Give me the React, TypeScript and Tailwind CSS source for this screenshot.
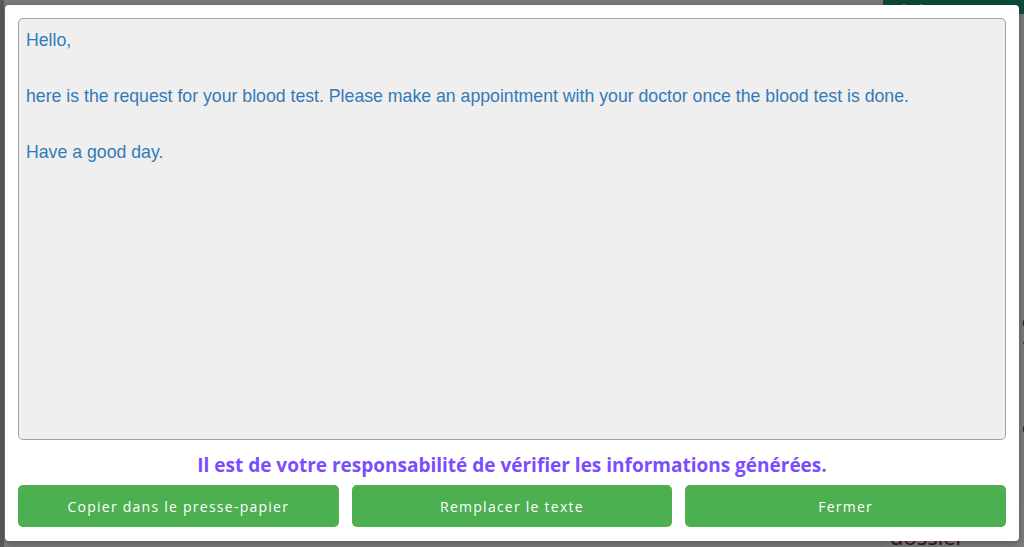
export default function App() {
  const buttons = ['Copier dans le presse-papier', 'Remplacer le texte', 'Fermer'];

  return (
    <div className="relative h-[547px] w-full overflow-hidden bg-[#f6f6f6]" style={{ fontFamily: '"Open Sans", sans-serif' }}>
      {/* page behind the dialog */}
      <div className="flex h-full">
        <div className="w-[4px] bg-[#b4b4b4]"></div>
        <div className="flex flex-1 flex-col">
          <div className="flex justify-end -mt-[10px]">
            <div className="flex h-[24px] w-[141px] items-center bg-[#1d9478] px-[8px] text-[20px] leading-[20px] text-white">Nouvelle tâche</div>
          </div>
          <div className="flex flex-1 flex-col items-end pt-[295px] text-[18px] leading-[24px] text-[#222]">
            <span className="-mr-[8px]">e</span>
            <span className="-mr-[8px]">v</span>
            <span className="-mr-[8px] mt-[58px]">e</span>
          </div>
          <div className="flex justify-end">
            <div className="w-[141px] bg-[#fafafa] px-[7px] pt-[3px] text-[22px] leading-[22px] text-[#8b1c1c]">Autre dossier</div>
          </div>
        </div>
      </div>

      {/* overlay + dialog */}
      <div className="absolute inset-0 bg-black/50 pt-[5px] pr-[5px] pb-[6px] pl-[5px]">
        <div className="flex h-full flex-col rounded-[4px] bg-white px-[13px] pt-[13px] pb-[14px] shadow-[0_2px_8px_rgba(0,0,0,0.3)]">
          <div
            className="flex-1 rounded-[5px] border border-[#a3a3a3] bg-[#efefef] px-[7px] pt-[7px] text-[17.7px] leading-[28px] text-[#337ab7]"
            style={{ fontFamily: '"Liberation Sans", Arial, sans-serif' }}
          >
            <p>Hello,</p>
            <p>&nbsp;</p>
            <p>here is the request for your blood test. Please make an appointment with your doctor once the blood test is done.</p>
            <p>&nbsp;</p>
            <p>Have a good day.</p>
          </div>
          <p className="mt-[12px] text-center text-[19px] font-bold leading-[26px] text-[#7c4dff]">
            Il est de votre responsabilité de vérifier les informations générées.
          </p>
          <div className="mt-[7px] grid grid-cols-3 gap-[13px]">
            {buttons.map((label) => (
              <button
                key={label}
                className="flex h-[42px] items-center justify-center rounded-[5px] bg-[#4caf50] text-[14px] font-medium tracking-[1.25px] text-white"
              >
                {label}
              </button>
            ))}
          </div>
        </div>
      </div>
    </div>
  );
}
